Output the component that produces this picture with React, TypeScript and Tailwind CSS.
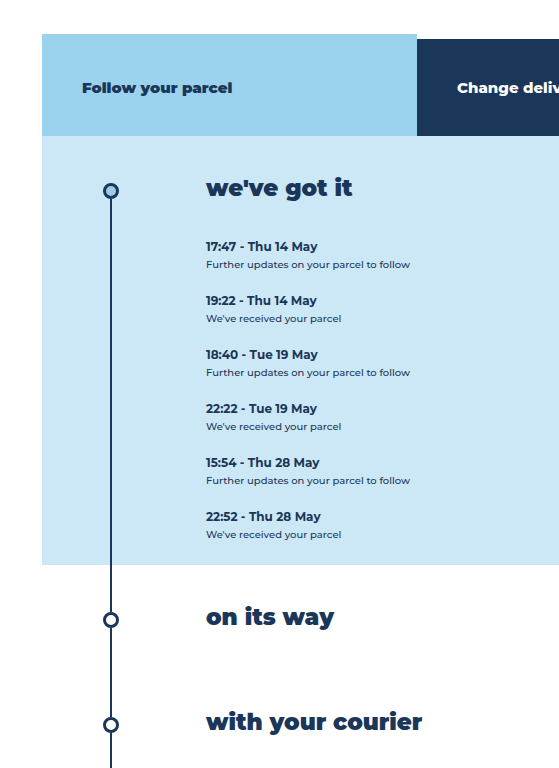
import clsx from "clsx"

type ParcelEvent = {
  time: string
  message: string
}

type Step = {
  title: string
  events: ParcelEvent[]
}

const steps: Step[] = [
  {
    title: "we've got it",
    events: [
      { time: "17:47 - Thu 14 May", message: "Further updates on your parcel to follow" },
      { time: "19:22 - Thu 14 May", message: "We've received your parcel" },
      { time: "18:40 - Tue 19 May", message: "Further updates on your parcel to follow" },
      { time: "22:22 - Tue 19 May", message: "We've received your parcel" },
      { time: "15:54 - Thu 28 May", message: "Further updates on your parcel to follow" },
      { time: "22:52 - Thu 28 May", message: "We've received your parcel" },
    ],
  },
  { title: "on its way", events: [] },
  { title: "with your courier", events: [] },
]

function Tabs() {
  return (
    <div className="flex items-end">
      <button
        type="button"
        className="h-[102px] w-[375px] shrink-0 bg-[#9bd2ed] px-10 pt-[7px] text-left text-[15px] font-black"
      >
        Follow your parcel
      </button>
      <button
        type="button"
        className="h-[97px] w-[375px] shrink-0 bg-[#1a3658] px-10 pt-0.5 text-left text-[15px] font-extrabold text-white"
      >
        Change delivery
      </button>
    </div>
  )
}

function TimelineStep({ step, first }: { step: Step; first: boolean }) {
  return (
    <li className={clsx("flex min-h-[105px]", first && "bg-[#cce8f6]")}>
      <div className="flex w-[138px] shrink-0 flex-col items-center">
        <span className={clsx("h-[47px] w-0.5", !first && "bg-[#1a3658]")} />
        <span
          className={clsx(
            "size-4 rounded-full border-3 border-[#1a3658]",
            first ? "bg-[#9fcbe6]" : "bg-white",
          )}
        />
        <span className="w-0.5 flex-1 bg-[#1a3658]" />
      </div>
      <div className="flex-1 pt-9 pl-[26px]">
        <h2 className="text-[23px] leading-8 font-black">{step.title}</h2>
        {step.events.length > 0 && (
          <ul className="space-y-[18px] pt-[34px] pb-[21px]">
            {step.events.map((event) => (
              <li key={event.time}>
                <p className="text-[12px] leading-[18px] font-bold">{event.time}</p>
                <p className="text-[10px] leading-[18px] font-medium">{event.message}</p>
              </li>
            ))}
          </ul>
        )}
      </div>
    </li>
  )
}

export default function App() {
  return (
    <main className="h-screen overflow-hidden bg-white pt-[34px] pl-[42px] font-[Montserrat,Inter,sans-serif] text-[#1a3658]">
      <Tabs />
      <ol>
        {steps.map((step, index) => (
          <TimelineStep key={step.title} step={step} first={index === 0} />
        ))}
      </ol>
    </main>
  )
}
